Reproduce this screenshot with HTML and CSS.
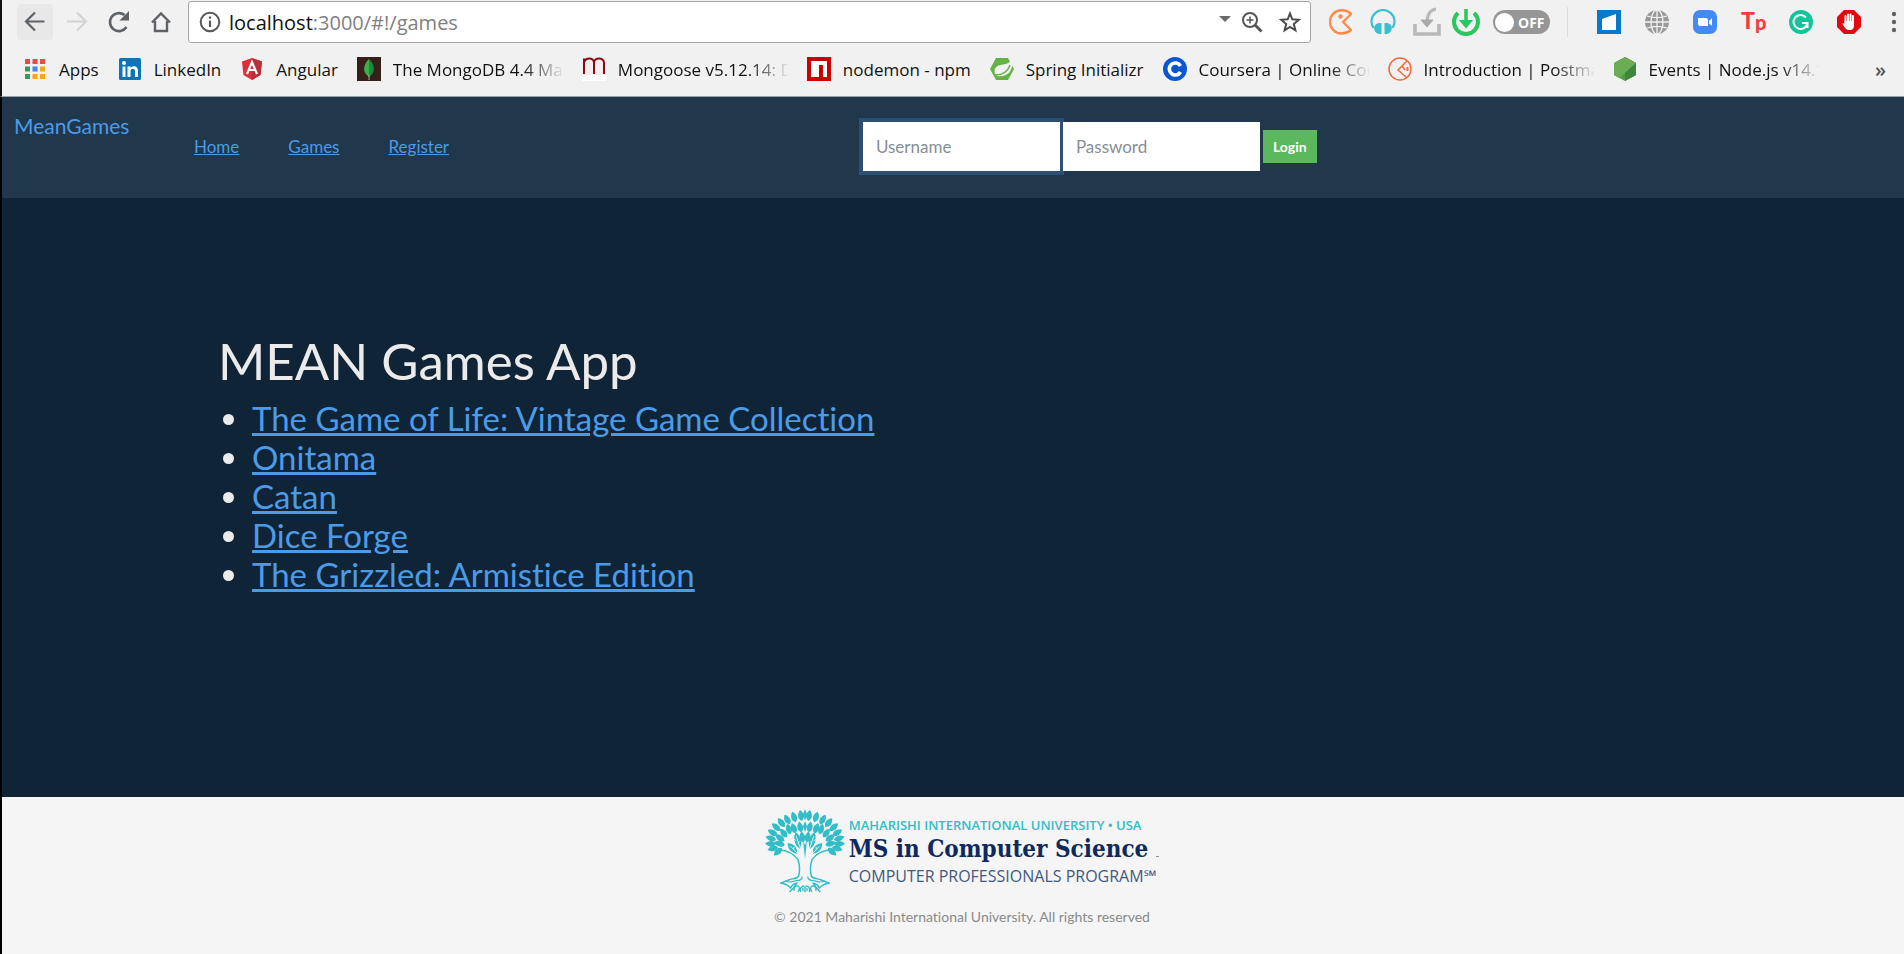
FILE: index.html
```html
<!DOCTYPE html>
<html lang="en">
<head>
<meta charset="utf-8">
<title>MEAN Games</title>
<link rel="stylesheet" href="styles.css">
</head>
<body>
<div class="browser">
  <div class="toolbar">
    <div class="history">
      <button class="tool active" aria-label="Back"><svg width="36" height="36" viewBox="0 0 36 36" fill="none" stroke="#5f6368" stroke-width="2.2"><path d="M27.500 17.500H10M18 8.500L9 17.500L18 26.500"/></svg></button>
      <button class="tool" aria-label="Forward"><svg width="36" height="36" viewBox="0 0 36 36" fill="none" stroke="#d3d3d3" stroke-width="2.200"><path d="M8 17.500H26M18 8.500L27 17.500L18 26.500"/></svg></button>
      <button class="tool" aria-label="Reload"><svg width="36" height="36" viewBox="0 0 36 36"><path d="M25.500 23A9 9 0 1 1 23.500 11" fill="none" stroke="#5f6368" stroke-width="2.600"/><path d="M28 7V16.500H18.500Z" fill="#5f6368"/></svg></button>
      <button class="tool" aria-label="Home"><svg width="36" height="36" viewBox="0 0 36 36" fill="none" stroke="#5f6368" stroke-width="2.400"><path d="M9 18.500L18 9.500L27 18.500M12 17V27H24V17"/></svg></button>
    </div>
    <div class="address">
      <svg width="22" height="22" viewBox="0 0 22 22"><circle cx="11" cy="11" r="9.300" fill="none" stroke="#5a5a5a" stroke-width="2"/><path d="M11 9.500V16M11 5.500V7.700" stroke="#5a5a5a" stroke-width="2.200"/></svg>
      <span class="url">localhost<span class="path">:3000/#!/games</span></span>
      <svg class="caret" width="12" height="7" viewBox="0 0 12 7"><path d="M0 0H12L6 6Z" fill="#6b6b6b"/></svg>
      <button class="bare" aria-label="Zoom"><svg width="22" height="22" viewBox="0 0 22 22" fill="none" stroke="#555"><circle cx="9" cy="9" r="7" stroke-width="2"/><path d="M9 5.500V12.500M5.500 9H12.500" stroke-width="1.500"/><path d="M14 14L20.500 20.500" stroke-width="2.800"/></svg></button>
      <button class="bare" aria-label="Bookmark this page"><svg width="22" height="22" viewBox="0 0 22 22"><path d="M11 2.500L13.300 8.300L19.800 8.800L14.800 13L16.400 19.300L11 15.900L5.600 19.300L7.200 13L2.200 8.800L8.700 8.300Z" fill="none" stroke="#4b4b4b" stroke-width="2"/></svg></button>
    </div>
    <div class="extensions near">
      <svg width="24" height="26" viewBox="0 0 24 26" fill="none" stroke="#ff8a4c" stroke-width="2.400" stroke-linejoin="round"><path d="M22 5C18 1 14 1.300 12.500 1.300A11.500 11.500 0 0 0 12.500 24.500C16 24.500 19 23.500 22 21L14 13L22 5Z"/><circle cx="11.500" cy="7.500" r="1" fill="#ff8a4c"/></svg>
      <svg width="26" height="26" viewBox="0 0 26 26"><path d="M3.500 19A11.500 11.500 0 1 1 22.500 19" fill="none" stroke="#39bfd0" stroke-width="2.200"/><path d="M9 14H11.500V25H9C3 24 2 15 9 14ZM17 14H14.500V25H17C23 24 24 15 17 14Z" fill="#39bfd0"/></svg>
      <svg width="28" height="30" viewBox="0 0 28 30" fill="none" stroke="#b9b9b9"><path d="M2 17V27H26V17" stroke-width="3.600"/><path d="M23 2C16 3 14 8 14 16" stroke-width="3.200"/><path d="M8 13H20L14 20Z" fill="#aaa" stroke="#aaa"/></svg>
      <svg width="30" height="30" viewBox="0 0 30 30" fill="none" stroke="#2bc65d"><path d="M7 6A12 12 0 1 0 23 6" stroke-width="4"/><path d="M15 2V17" stroke-width="3.500"/><path d="M10 14H20L15 20Z" fill="#2bc65d" stroke-width="2"/></svg>
      <button class="switch" aria-label="Extension off"><span class="knob"></span>OFF</button>
    </div>
    <div class="extensions far">
      <svg width="24" height="24" viewBox="0 0 24 24"><rect width="24" height="24" fill="#0878c8"/><path d="M5 9L19 4V20H5Z" fill="#fff"/></svg>
      <svg width="24" height="24" viewBox="0 0 24 24" fill="none" stroke="#f1f1f1" stroke-width="1.300"><circle cx="12" cy="12" r="12" fill="#999" stroke="none"/><path d="M12 0V24M0 12H24M2 6C8 8 16 8 22 6M2 18C8 16 16 16 22 18"/><ellipse cx="12" cy="12" rx="6" ry="12"/></svg>
      <svg width="24" height="24" viewBox="0 0 24 24"><rect width="24" height="24" rx="7" fill="#4389f8"/><path d="M5 8H13Q15 8 15 10V16H7Q5 16 5 14ZM16 11L19 8V16L16 13.500Z" fill="#fff"/></svg>
      <span class="tp">T<span class="tp-low">p</span></span>
      <svg width="24" height="24" viewBox="0 0 24 24"><circle cx="12" cy="12" r="12" fill="#15c39a"/><path d="M17 7.500A7 7 0 1 0 18.500 13H13M18.500 12V18" fill="none" stroke="#fff" stroke-width="2"/></svg>
      <svg width="24" height="24" viewBox="0 0 24 24"><path d="M7 0H17L24 7V17L17 24H7L0 17V7Z" fill="#e00b12"/><path d="M8.500 13V6M11 12V4.500M13.500 12V4.500M16 13V6" stroke="#fff" stroke-width="2" stroke-linecap="round"/><path d="M7.500 11H17V15C17 18 16 20 12.500 20C9 20 8 18 5.500 14Q6 12.500 7.500 14Z" fill="#fff"/></svg>
    </div>
    <button class="bare menu" aria-label="Menu"><svg width="6" height="22" viewBox="0 0 6 22" fill="#5f6368"><circle cx="3" cy="3" r="2.200"/><circle cx="3" cy="11" r="2.200"/><circle cx="3" cy="19" r="2.200"/></svg></button>
  </div>
  <nav class="bookmarks" aria-label="Bookmarks">
    <a class="mark" href="#"><svg width="24" height="24" viewBox="0 0 24 24"><path d="M2 2h5v5H2zM9.500 2h5v5h-5zM17 2h5v5h-5z" fill="#ea4848"/><path d="M2 9.500h5v5H2zM2 17h5v5H2z" fill="#349a5c"/><path d="M9.500 9.500h5v5h-5z" fill="#4285f4"/><path d="M17 9.500h5v5h-5zM9.500 17h5v5h-5zM17 17h5v5h-5z" fill="#f3a71f"/></svg><span class="label">Apps</span></a>
    <a class="mark" href="#"><svg width="24" height="24" viewBox="0 0 24 24"><rect x="1" y="1" width="22" height="22" rx="1.500" fill="#0a76b8"/><g fill="#fff"><circle cx="6" cy="6" r="2"/><path d="M4.500 9.500h3V20h-3zM9.500 9.500h3V11c2-3 7.500-2.500 7.500 2.500V20h-3v-6c0-3.300-4.500-3-4.500 0v6h-3z"/></g></svg><span class="label">LinkedIn</span></a>
    <a class="mark" href="#"><svg width="24" height="24" viewBox="0 0 24 24"><path d="M12 1L22 4.500L20.500 18L12 23L3.500 18L2 4.500Z" fill="#df2e38"/><path d="M12 1L22 4.500L20.500 18L12 23Z" fill="#b9303a"/><path d="M7 17L12 5L17 17M9 13H15" fill="none" stroke="#fff" stroke-width="2.200"/></svg><span class="label">Angular</span></a>
    <a class="mark" href="#"><svg width="24" height="24" viewBox="0 0 24 24"><rect width="24" height="24" fill="#35211a"/><path d="M12 2C5 9 6 16 12 20Z" fill="#3fae49"/><path d="M12 2C19 9 18 16 12 20Z" fill="#188c3a"/><path d="M12 18V23" stroke="#9bb79a"/></svg><span class="label long">The MongoDB 4.4 Ma</span></a>
    <a class="mark" href="#"><svg width="24" height="24" viewBox="0 0 24 24"><rect width="24" height="24" fill="#fff"/><path d="M0 0H24V18H0Z" fill="#f5eeee"/><path d="M2 17V1.500M2 6C3 0 12 0 12 6V17M12 6C12 0 22 0 22 6V17" fill="none" stroke="#880b14" stroke-width="2"/></svg><span class="label long">Mongoose v5.12.14: D</span></a>
    <a class="mark" href="#"><svg width="24" height="24" viewBox="0 0 24 24"><rect width="24" height="24" fill="#cb0000"/><path d="M4 4H20V20H16V8H12V20H4Z" fill="#fff"/></svg><span class="label">nodemon - npm</span></a>
    <a class="mark" href="#"><svg width="24" height="24" viewBox="0 0 24 24"><path d="M6 1H18L24 12L18 23H6L0 12Z" fill="#63b345"/><path d="M22 2C24 14 17 21 7 19C2 14 5 8 13 7.500Q19 7 22 2Z" fill="#f1f1f1"/><path d="M5 18C13 18 18 14 20 8" fill="none" stroke="#63b345" stroke-width="1.400"/></svg><span class="label">Spring Initializr</span></a>
    <a class="mark" href="#"><svg width="24" height="24" viewBox="0 0 24 24"><circle cx="12" cy="12" r="12" fill="#0b57d0"/><path d="M17.500 9A6 6 0 1 0 17.500 15" fill="none" stroke="#fff" stroke-width="3.600"/></svg><span class="label long">Coursera | Online Cou</span></a>
    <a class="mark" href="#"><svg width="24" height="24" viewBox="0 0 24 24" fill="none" stroke="#f26b3a" stroke-width="1.500"><circle cx="12" cy="12" r="11"/><path d="M19 4L10 13L19 21M14 9L17 13"/><path d="M19.500 10V14" stroke-width="2"/></svg><span class="label long">Introduction | Postma</span></a>
    <a class="mark" href="#"><svg width="24" height="24" viewBox="0 0 24 24"><path d="M12 0L23 6V18L12 24L1 18V6Z" fill="#539e43"/><path d="M12 0L23 6V18L12 24Z" fill="#3e863d"/><path d="M12 0L23 6L6 21L1 18V6Z" fill="#6cac57"/></svg><span class="label long">Events | Node.js v14.1</span></a>
    <button class="bare more" aria-label="More bookmarks">»</button>
  </nav>
</div>
<div class="page">
  <header class="navbar">
    <a class="brand" href="#">MeanGames</a>
    <nav class="links"><a href="#">Home</a><a href="#">Games</a><a href="#">Register</a></nav>
    <form class="login">
      <input class="field focused" type="text" placeholder="Username" aria-label="Username">
      <input class="field" type="password" placeholder="Password" aria-label="Password">
      <button class="submit" type="button">Login</button>
    </form>
  </header>
  <main class="content">
    <h1 class="title">MEAN Games App</h1>
    <ul class="games">
      <li><a href="#">The Game of Life: Vintage Game Collection</a></li>
      <li><a href="#">Onitama</a></li>
      <li><a href="#">Catan</a></li>
      <li><a href="#">Dice Forge</a></li>
      <li><a href="#">The Grizzled: Armistice Edition</a></li>
    </ul>
  </main>
  <footer class="footer">
    <div class="logo">
      <svg class="tree" width="80" height="84" viewBox="33 26 240 252">
        <defs>
          <path id="leaf" d="M0 0C-12 -8 -11 -22 0 -33C11 -22 12 -8 0 0Z"/>
          <g id="side" fill="#32bdc8">
            <use href="#leaf" transform="translate(143 62) rotate(-8)"/>
            <use href="#leaf" transform="translate(125 66) rotate(-18)"/>
            <use href="#leaf" transform="translate(108 72) rotate(-30)"/>
            <use href="#leaf" transform="translate(92 80) rotate(-38)"/>
            <use href="#leaf" transform="translate(79 91) rotate(-50)"/>
            <use href="#leaf" transform="translate(70 105) rotate(-60)"/>
            <use href="#leaf" transform="translate(66 119) rotate(-72)"/>
            <use href="#leaf" transform="translate(66 131) rotate(-88)"/>
            <use href="#leaf" transform="translate(72 140) rotate(-106)"/>
            <use href="#leaf" transform="translate(84 143) rotate(-132)"/>
            <use href="#leaf" transform="translate(142 96) rotate(-12)"/>
            <use href="#leaf" transform="translate(125 99) rotate(-20)"/>
            <use href="#leaf" transform="translate(109 102) rotate(-16)"/>
            <use href="#leaf" transform="translate(99 111) rotate(-38)"/>
            <use href="#leaf" transform="translate(91 122) rotate(-55)"/>
            <use href="#leaf" transform="translate(92 134) rotate(-76)"/>
            <use href="#leaf" transform="translate(147 126) rotate(-8)"/>
            <path d="M138 146C120 134 117 112 125 96C140 106 146 122 138 146ZM129 160C109 157 101 144 101 128C119 130 132 142 129 160Z"/>
            <g fill="none" stroke="#f5f5f5" stroke-width="2.500"><path d="M139 144L127 108M129 158L109 137M127 121L120 117M132 130L136 123M119 147L120 140"/></g>
            <path d="M78 148C100 151 120 160 132 178C138 196 138 211 134 227C128 237 113 234 104 239L79 249C97 249 101 255 110 263C114 255 119 250 128 249C122 260 115 267 107 275" fill="none" stroke="#32bdc8" stroke-width="4.500"/>
            <path d="M94 242C108 249 115 243 128 241C137 241 144 239 145 229" fill="none" stroke="#32bdc8" stroke-width="3.500"/>
            <path d="M120 272Q119 255 132 257Q140 261 132 275M140 275Q136 259 150 257M147 273V263" fill="none" stroke="#32bdc8" stroke-width="4"/>
          </g>
        </defs>
        <use href="#side"/>
        <use href="#side" transform="translate(306 0) scale(-1 1)"/>
        <path d="M153 26L160 44L153 60L146 44ZM153 62L159 78L153 95L147 78ZM147 120L153 176L159 120L153 134Z" fill="#32bdc8"/>
        <path d="M153 256V276" stroke="#32bdc8" stroke-width="4"/>
      </svg>
      <div class="wordmark">
        <span class="university">MAHARISHI INTERNATIONAL UNIVERSITY • USA</span>
        <span class="degree">MS in Computer Science</span>
        <span class="program">COMPUTER PROFESSIONALS PROGRAM℠</span>
      </div>
    </div>
    <p class="copyright">© 2021 Maharishi International University. All rights reserved</p>
  </footer>
</div>
</body>
</html>
```

FILE: styles.css
```css
* {
  box-sizing: border-box;
}

body {
  margin: 0;
  min-height: 100vh;
  display: flex;
  flex-direction: column;
  background: #0f2537;
  font-family: Lato, "Liberation Sans", sans-serif;
  font-variant-ligatures: none;
}

svg {
  display: block;
  flex: none;
}

button {
  border: 0;
  padding: 0;
  background: none;
  font: inherit;
}

.browser {
  border-bottom: 1px solid #9aa3aa;
  border-left: 2px solid #111;
  background: #f1f1f1;
  font-family: "Open Sans", "Noto Sans", sans-serif;
  color: #111;
}

.toolbar {
  display: flex;
  align-items: center;
  height: 44px;
  padding: 1px 7px 1px 15px;
}

.history {
  display: flex;
  gap: 6px;
  margin-right: 9px;
}

.tool {
  border-radius: 4px;
}

.tool.active {
  background: #e8e8e8;
}

.address {
  flex: 1;
  display: flex;
  align-items: center;
  height: 42px;
  padding: 0 9px 0 10px;
  border: 1px solid #a6a6a6;
  border-radius: 3px;
  background: #fff;
  font-size: 20px;
}

.url {
  flex: 1;
  margin-left: 8px;
}

.path {
  color: #808080;
}

.caret {
  margin: 0 10px 6px 0;
}

.bare + .bare {
  margin-left: 16px;
}

.extensions {
  display: flex;
  align-items: center;
}

.near {
  gap: 17px;
  padding: 0 17px 0 18px;
  border-right: 1px solid #dcdcdc;
}

.near svg + svg + svg + svg {
  margin-left: -7px;
}

.switch {
  display: flex;
  align-items: center;
  gap: 4px;
  width: 57px;
  height: 24px;
  padding: 0 2px;
  border-radius: 12px;
  margin-left: -5px;
  background: #969696;
  color: #fff;
  font-size: 14px;
  font-weight: 700;
}

.knob {
  width: 19px;
  height: 19px;
  border-radius: 50%;
  background: #fff;
}

.far {
  gap: 24px;
  padding: 0 30px 0 29px;
}

.tp {
  display: flex;
  width: 24px;
  color: #f03e3e;
  font: 900 23px/24px Lato, sans-serif;
}

.tp-low {
  font-size: 20px;
  line-height: 28px;
}

.bookmarks {
  display: flex;
  align-items: center;
  gap: 19px;
  height: 52px;
  padding: 0 18px 2px 21px;
}

.mark {
  display: flex;
  align-items: center;
  gap: 12px;
  color: #111;
  font-size: 17px;
  text-decoration: none;
  white-space: nowrap;
}

.long {
  width: 170px;
  mask-image: linear-gradient(to right, #000 130px, transparent 172px);
}

.more {
  margin-left: auto;
  color: #555;
  font-size: 20px;
  font-weight: 600;
}

.page {
  flex: 1;
  display: flex;
  flex-direction: column;
  border-left: 2px solid #000;
}

.navbar {
  display: grid;
  grid-template-columns: 180px 39fr 61fr;
  padding: 16px 0 27px 12px;
  background: #20374c;
}

a {
  color: #4c9be8;
}

.brand {
  font-size: 21px;
  line-height: 26px;
  text-decoration: none;
}

.links {
  display: flex;
  align-items: center;
  gap: 49px;
  padding-top: 8px;
  font-size: 17px;
}

.login {
  display: flex;
  align-items: center;
  gap: 3px;
  padding: 9px 0 0 2px;
}

.field {
  width: 197px;
  height: 49px;
  padding: 0 13px;
  border: 0;
  background: #fff;
  font: 17px Lato, sans-serif;
}

.field::placeholder {
  color: #868e96;
}

.focused {
  box-shadow: 0 0 0 4px #2c5074;
}

.field:not(.focused) {
  position: relative;
}

.submit {
  height: 33px;
  padding: 0 10px;
  background: #5cb85c;
  color: #fff;
  font-size: 14px;
  font-weight: 700;
}

.content {
  flex: 1;
  padding: 133px 216px;
  color: #ebebeb;
}

.title {
  margin: 0 0 8px;
  font-size: 51px;
  font-weight: 400;
  line-height: 60px;
}

.games {
  margin: 0;
  padding-left: 34px;
  font-size: 33px;
  line-height: 39px;
}

.footer {
  display: flex;
  flex-direction: column;
  align-items: center;
  padding: 12px 0 25px 18px;
  background: #f5f5f5;
}

.logo {
  display: flex;
  gap: 4px;
}

.wordmark {
  display: flex;
  flex-direction: column;
  padding-top: 7px;
  font-family: "Open Sans", "Noto Sans", sans-serif;
  white-space: nowrap;
}

.university {
  color: #32bdc8;
  font-size: 13px;
  font-weight: 600;
  line-height: 18px;
}

.degree {
  color: #0e2a5c;
  font: 700 24px/30px "DejaVu Serif Condensed", "DejaVu Serif", serif;
}

.degree::after {
  content: "";
  display: inline-block;
  width: 3px;
  height: 1px;
  margin-left: 8px;
  background: #8a94a6;
}

.program {
  color: #43597f;
  font-size: 16px;
  line-height: 25px;
}

.copyright {
  margin: 12px 0 0;
  color: #8a8a8a;
  font-size: 14px;
  line-height: 24px;
}
```
